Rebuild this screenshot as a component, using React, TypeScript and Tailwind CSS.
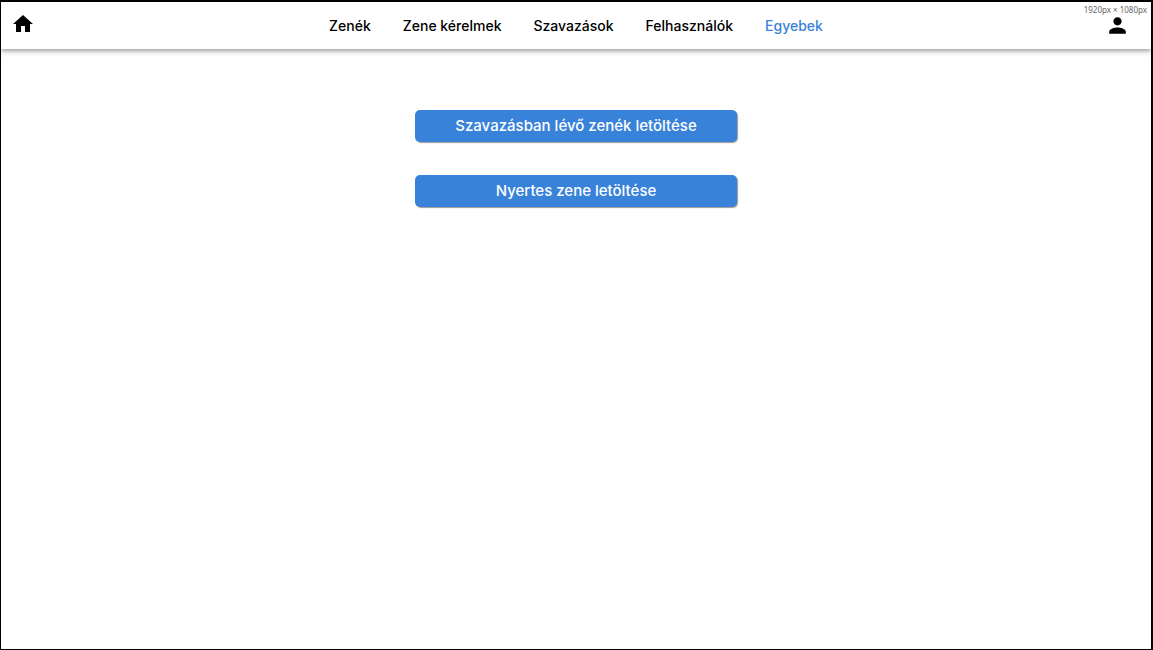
import { MdHome, MdPerson } from "react-icons/md";

const links = ["Zenék", "Zene kérelmek", "Szavazások", "Felhasználók", "Egyebek"];
const actions = ["Szavazásban lévő zenék letöltése", "Nyertes zene letöltése"];

export default function App() {
  return (
    <div className="flex min-h-screen flex-col border-t-2 border-r-2 border-b border-l border-black bg-white font-['Inter',sans-serif] text-black">
      <header className="relative grid h-[47px] grid-cols-[1fr_auto_1fr] items-center shadow-[0_2px_5px_rgba(0,0,0,0.4)]">
        <a href="#" aria-label="Főoldal" className="justify-self-start pb-1 pl-2.5">
          <MdHome size={24} />
        </a>
        <nav className="flex gap-8">
          {links.map((link) => (
            <a
              key={link}
              href="#"
              aria-current={link === "Egyebek" ? "page" : undefined}
              className="text-sm font-medium text-black aria-[current=page]:text-[#3982da]"
            >
              {link}
            </a>
          ))}
        </nav>
        <a href="#" aria-label="Profil" className="justify-self-end pr-[21px]">
          <MdPerson size={25} />
        </a>
        <span className="absolute top-0.5 right-1 font-['Noto_Sans',sans-serif] text-[8px] leading-3 text-[#666666]">
          1920px × 1080px
        </span>
      </header>
      <main className="flex flex-col items-center gap-[33px] pt-[61px]">
        {actions.map((action) => (
          <button
            key={action}
            type="button"
            className="h-8 w-[28%] rounded-[5px] bg-[#3982da] text-[15px] font-medium text-white shadow-[1px_1px_1px_rgba(0,0,0,0.4)]"
          >
            {action}
          </button>
        ))}
      </main>
    </div>
  );
}
